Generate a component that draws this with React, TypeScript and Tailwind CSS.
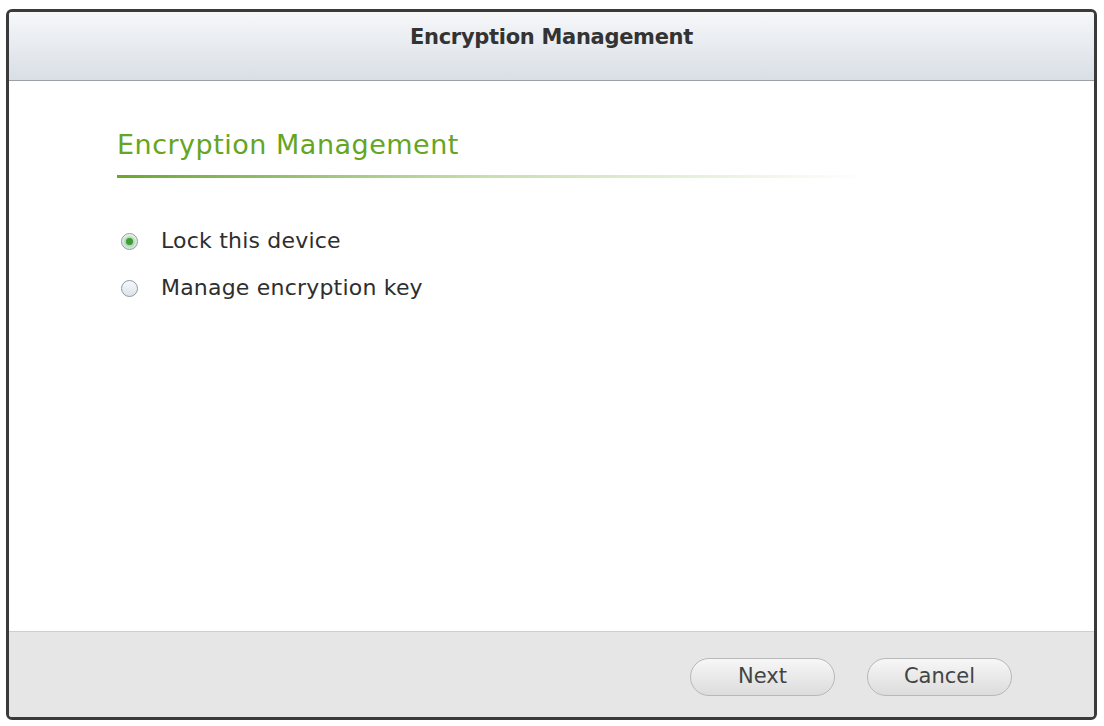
import React from "react";

function Radio({ checked }: { checked: boolean }) {
  return (
    <span className="flex h-[17px] w-[17px] shrink-0 items-center justify-center rounded-full border-[1.5px] border-[#8d99a6] bg-gradient-to-b from-[#f6f8fa] to-[#dde3ea]">
      {checked && <span className="h-[7px] w-[7px] rounded-full bg-[#3f9a3a] shadow-[0_0_3px_2px_#9ed89a]" />}
    </span>
  );
}

export default function App() {
  return (
    <div className="h-[726px] w-[1104px] bg-white pt-[9px] pl-[6px]" style={{ fontFamily: '"DejaVu Sans", Verdana, sans-serif' }}>
      <div className="flex h-[711px] w-[1091px] flex-col overflow-hidden rounded-[6px] border-[3px] border-[#3a3a3a] bg-white">
        <div className="flex h-[69px] shrink-0 items-start justify-center border-b border-[#9aa0a6] bg-gradient-to-b from-[#f6f7f9] to-[#d9dfe6] pt-[13px]">
          <span className="text-[21px] font-bold leading-[24px] tracking-[-0.3px] text-[#333]">Encryption Management</span>
        </div>
        <div className="flex-1 pl-[108px] pt-[48px]">
          <div className="text-[27px] leading-[32px] tracking-[0.5px] text-[#65a522]">Encryption Management</div>
          <div className="mt-[14px] h-[3px] w-[750px] bg-gradient-to-r from-[#6aa829] via-[#c9dfb0] to-transparent" />
          <div className="ml-[4px] mt-[50px] flex flex-col gap-[21px] text-[22px] leading-[26px] tracking-[0.2px] text-[#2e2e2e]">
            <label className="flex items-center gap-[23px]">
              <Radio checked />
              <span>Lock this device</span>
            </label>
            <label className="flex items-center gap-[23px]">
              <Radio checked={false} />
              <span>Manage encryption key</span>
            </label>
          </div>
        </div>
        <div className="flex h-[86px] shrink-0 items-center justify-end gap-[32px] border-t border-[#cfcfcf] bg-[#e6e6e6] pr-[82px] pt-[4px]">
          <button className="h-[38px] w-[145px] rounded-full border border-[#b8b8b8] bg-gradient-to-b from-[#f7f7f7] to-[#dcdcdc] text-[21px] text-[#444]">Next</button>
          <button className="h-[38px] w-[145px] rounded-full border border-[#b8b8b8] bg-gradient-to-b from-[#f7f7f7] to-[#dcdcdc] text-[21px] text-[#444]">Cancel</button>
        </div>
      </div>
    </div>
  );
}
